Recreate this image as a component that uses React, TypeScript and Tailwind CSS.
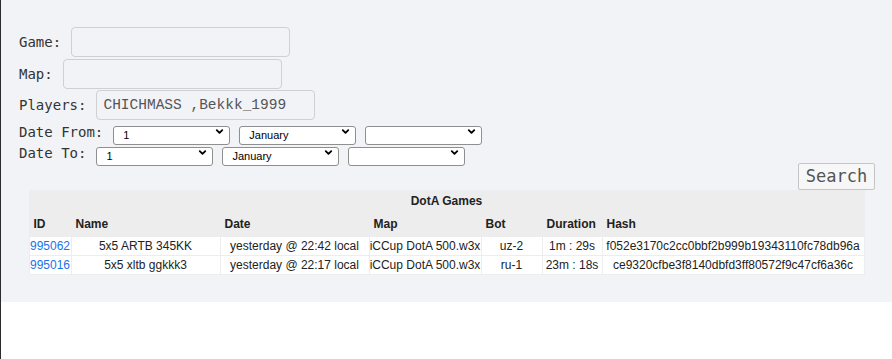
import { ChevronDown } from 'lucide-react';

const mono = { fontFamily: '"DejaVu Sans Mono", monospace' };

const games = [
  {
    id: '995062',
    name: '5x5 ARTB 345KK',
    date: 'yesterday @ 22:42 local',
    map: 'iCCup DotA 500.w3x',
    bot: 'uz-2',
    duration: '1m : 29s',
    hash: 'f052e3170c2cc0bbf2b999b19343110fc78db96a',
  },
  {
    id: '995016',
    name: '5x5 xltb ggkkk3',
    date: 'yesterday @ 22:17 local',
    map: 'iCCup DotA 500.w3x',
    bot: 'ru-1',
    duration: '23m : 18s',
    hash: 'ce9320cfbe3f8140dbfd3ff80572f9c47cf6a36c',
  },
];

function Select({ value }: { value: string }) {
  return (
    <div className="relative h-[19px] w-[117px]">
      <select
        defaultValue={value}
        className="h-full w-full appearance-none rounded-[3px] border border-[#8f8f8f] bg-white pl-[9px] text-[11px] leading-[17px] text-black"
        style={{ fontFamily: '"Liberation Sans", Arial, sans-serif' }}
      >
        <option value={value}>{value}</option>
      </select>
      <ChevronDown
        className="pointer-events-none absolute right-[5px] top-[4px] h-[11px] w-[11px] text-black"
        strokeWidth={4}
      />
    </div>
  );
}

function TextRow({ label, value, className }: { label: string; value?: string; className?: string }) {
  return (
    <div className={`flex items-center ${className ?? ''}`}>
      <span className="mr-[10px] text-[14px] leading-none text-[#333]">{label}</span>
      <input
        defaultValue={value}
        className="h-[30px] w-[219px] rounded-[4px] border border-[#cfd0d3] bg-transparent px-[6px] py-0 text-[14.5px] leading-[22px] text-[#555] outline-none"
        style={{ fontFamily: '"Liberation Mono", "DejaVu Sans Mono", monospace' }}
      />
    </div>
  );
}

function DateRow({ label }: { label: string }) {
  return (
    <div className="mt-[2px] flex h-[19px] items-center">
      <span className="mr-[10px] text-[14px] leading-none text-[#333]">{label}</span>
      <div className="flex gap-[9px]">
        <Select value="1" />
        <Select value="January" />
        <Select value="" />
      </div>
    </div>
  );
}

export default function App() {
  return (
    <div className="h-[359px] w-[892px] border-l border-[#2b2b2b] bg-white">
      <div className="bg-[#f2f3f7] pb-[27px] pt-[27px]" style={mono}>
        <div className="pl-[18px]">
          <TextRow label="Game:" className="h-[30px]" />
          <TextRow label="Map:" className="mt-[2px] h-[30px]" />
          <TextRow label="Players:" value="CHICHMASS ,Bekkk_1999" className="h-[31px]" />
          <DateRow label="Date From:" />
          <DateRow label="Date To:" />
        </div>
        <div className="flex justify-end pr-[17px] pt-[1px]">
          <button className="h-[27px] w-[77px] rounded-[2px] border border-[#c4c5c8] bg-[#f7f7f8] text-[17px] leading-none text-[#555]">
            Search
          </button>
        </div>
        <table
          className="mx-auto w-[836px] border-separate border-spacing-[1px] bg-[#ededed] text-[12px] text-[#222]"
          style={{ fontFamily: '"Liberation Sans", Arial, sans-serif' }}
        >
          <thead>
            <tr className="h-[19px]">
              <th colSpan={7} className="text-center font-bold">
                DotA Games
              </th>
            </tr>
            <tr className="h-[25px] text-left font-bold">
              <th className="w-[41px] pl-[4px]">ID</th>
              <th className="w-[148px] pl-[4px]">Name</th>
              <th className="w-[148px] pl-[4px]">Date</th>
              <th className="w-[111px] pl-[4px]">Map</th>
              <th className="w-[60px] pl-[4px]">Bot</th>
              <th className="w-[59px] pl-[4px]">Duration</th>
              <th className="pl-[4px]">Hash</th>
            </tr>
          </thead>
          <tbody>
            {games.map((g) => (
              <tr key={g.id} className="h-[18px] bg-white text-center">
                <td>
                  <a href="#" className="text-[#1a73e8]">
                    {g.id}
                  </a>
                </td>
                <td>{g.name}</td>
                <td>{g.date}</td>
                <td>{g.map}</td>
                <td>{g.bot}</td>
                <td>{g.duration}</td>
                <td>{g.hash}</td>
              </tr>
            ))}
          </tbody>
        </table>
      </div>
    </div>
  );
}
